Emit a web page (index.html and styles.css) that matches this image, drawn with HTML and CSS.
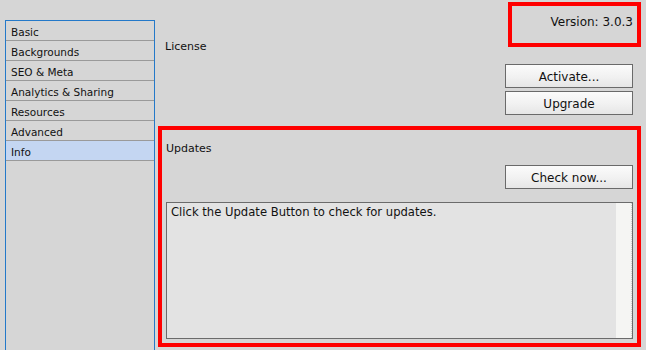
FILE: index.html
```html
<!DOCTYPE html>
<html lang="en">
<head>
    <meta charset="UTF-8">
    <meta name="viewport" content="width=device-width, initial-scale=1.0">
    <title>Settings - Info</title>
    <link rel="stylesheet" href="styles.css">
</head>
<body>
    <div class="window">
        <!-- Left settings navigation -->
        <ul class="nav">
            <li>Basic</li>
            <li>Backgrounds</li>
            <li>SEO &amp; Meta</li>
            <li>Analytics &amp; Sharing</li>
            <li>Resources</li>
            <li>Advanced</li>
            <li class="active">Info</li>
        </ul>

        <main class="panel">
            <div class="license-row">
                <span class="label license-label">License</span>
                <div class="version">Version: 3.0.3</div>
            </div>

            <div class="actions">
                <button type="button">Activate...</button>
                <button type="button">Upgrade</button>
            </div>

            <section class="updates">
                <div class="label">Updates</div>
                <div class="actions">
                    <button type="button">Check now...</button>
                </div>
                <div class="log">
                    <p>Click the Update Button to check for updates.</p>
                    <div class="scroll-track"></div>
                </div>
            </section>
        </main>
    </div>
</body>
</html>
```

FILE: styles.css
```css
/* General Page Styling */
body {
    margin: 0;
    background-color: #d6d6d6; /* Mac window grey */
    color: #111111;
    font-family: 'DejaVu Sans', 'Liberation Sans', sans-serif;
    height: 350px;
    overflow: hidden;
}

.window {
    display: flex;
    height: 350px;
}

/* Sidebar */
.nav {
    list-style: none;
    margin: 20px 0 0 5px;
    padding: 0;
    width: 148px;
    flex-shrink: 0;
    border: 1px solid #2479c9; /* focus blue */
    border-bottom: none;
}

.nav li {
    height: 20px;
    box-sizing: border-box;
    line-height: 17px;
    padding: 3px 0 0 5px;
    border-bottom: 1px solid #9a9a9a;
    font-size: 10.5px;
}

.nav li.active {
    background: #c4d6f2;
}

/* Main panel */
.panel {
    flex: 0 0 483px;
    margin-left: 3px;
    display: flex;
    flex-direction: column;
}

.label {
    font-size: 11px;
    line-height: 15px;
}

.license-row {
    display: flex;
    justify-content: space-between;
    align-items: flex-start;
    margin-top: 2px;
}

.license-label {
    margin: 37px 0 0 7px;
}

.version {
    width: 133px;
    height: 45px;
    box-sizing: border-box;
    border: 4px solid #ff0000; /* highlight */
    padding: 8px 4px 0 0;
    text-align: right;
    font-size: 12px;
    line-height: 16px;
}

/* Buttons */
.actions {
    display: flex;
    flex-direction: column;
    align-items: flex-end;
    gap: 3px;
    margin-top: 10px;
    padding-right: 8px;
}

button {
    width: 128px;
    height: 24px;
    border: 1px solid #6a6a6a;
    border-radius: 0;
    background: linear-gradient(#fbfbfb, #f1f1f1 55%, #e6e6e6);
    color: #111111;
    font-family: inherit;
    font-size: 12px;
    padding: 2px 0 0;
}

/* Updates box */
.updates {
    margin-top: 11px;
    height: 221px;
    box-sizing: border-box;
    border: 4px solid #ff0000;
    padding: 11px 4px 4px 4px;
    display: flex;
    flex-direction: column;
}

.updates .actions {
    padding-right: 0;
    margin-top: 9px;
}

.log {
    flex: 1;
    margin-top: 13px;
    display: flex;
    border: 1px solid #6b6b6b;
    background: #e3e3e3;
}

.log p {
    flex: 1;
    margin: 0;
    padding: 2px 4px;
    font-size: 11.6px;
    line-height: 15px;
}

.scroll-track {
    width: 16px;
    background: #f5f5f3;
    border-right: 1px dotted #cfcfcf;
    box-sizing: border-box;
}
```
